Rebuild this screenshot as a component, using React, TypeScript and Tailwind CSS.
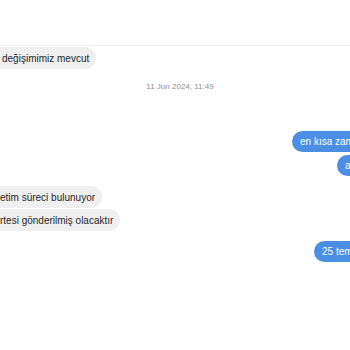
const Left = ({ text, className = "" }: { text: string; className?: string }) => (
  <div className={`flex ${className}`}>
    <div className="ml-[-20px] whitespace-nowrap rounded-full bg-[#efefef] pl-[20px] pr-[7px] h-[22px] flex items-center text-[10px] text-[#262626]">
      {text}
    </div>
  </div>
);

const Right = ({ text, className = "" }: { text: string; className?: string }) => (
  <div className={`flex ${className}`}>
    <div className="whitespace-nowrap rounded-l-full bg-[#4a8fe3] pl-[8px] pr-[40px] h-[21px] flex items-center text-[10px] text-white">
      {text}
    </div>
  </div>
);

export default function App() {
  return (
    <div
      className="w-[350px] h-[350px] overflow-hidden bg-white"
      style={{ fontFamily: '"Liberation Sans", Arial, sans-serif' }}
    >
      <div className="h-[46px] border-b border-[#efefef]" />
      <div className="flex flex-col pt-[1px]">
        <Left text="değişimimiz mevcut" className="pl-[2px]" />
        <div className="mt-[12px] text-center text-[8px] text-[#8e8e8e] pl-[10px]">11 Jun 2024, 11:49</div>
        <Right text="en kısa zam" className="pl-[292px] mt-[38px]" />
        <Right text="a" className="pl-[337px] mt-[3px]" />
        <Left text="etim süreci bulunuyor" className="mt-[10px]" />
        <Left text="rtesi gönderilmiş olacaktır" className="mt-[1px]" />
        <Right text="25 tem" className="pl-[314px] mt-[10px]" />
      </div>
    </div>
  );
}
